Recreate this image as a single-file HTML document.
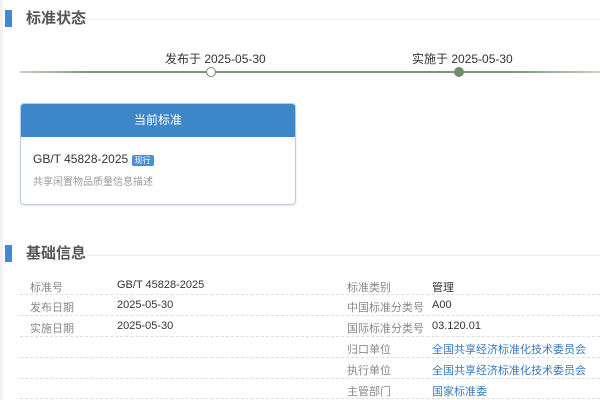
<!DOCTYPE html>
<html><head><meta charset="utf-8"><style>
body{margin:0;width:600px;height:400px;background:#fff;position:relative;overflow:hidden;font-family:"Liberation Sans","Noto Sans CJK SC",sans-serif;color:#333}
.a{position:absolute;white-space:nowrap}
.bar{position:absolute;left:5px;width:7px;height:17px;background:#3d8ad6}
.title{position:absolute;left:26px;font-size:15px;color:#555;line-height:18px;font-weight:bold}
.hl{position:absolute;left:82px;right:0;height:1px;background:#eee}
.row{position:absolute;left:20px;right:0;height:0;border-top:1px dashed #ddd}
.lb{font-size:11px;color:#888}
.v{font-size:11px;color:#333}
.lk{font-size:11px;color:#3a7bc0}
</style></head><body>
<div style="position:absolute;left:0;top:0;width:3px;height:400px;background:#f2f2f2"></div>
<div class="bar" style="top:10px"></div>
<div class="title" style="top:10px">标准状态</div>
<div class="hl" style="top:19px"></div>
<div class="a" style="left:165px;top:50px;font-size:12px;color:#333">发布于 2025-05-30</div>
<div class="a" style="left:412px;top:50px;font-size:12px;color:#333">实施于 2025-05-30</div>
<div class="a" style="left:20px;top:71px;width:580px;height:2px;background:linear-gradient(to right,#c9d3c8,#7a9677 12%,#7a9677 85%,#c9d3c8)"></div>
<div class="a" style="left:206px;top:67px;width:8px;height:8px;border:1.5px solid #6f8f6a;border-radius:50%;background:#fff"></div>
<div class="a" style="left:454px;top:67px;width:10px;height:10px;border-radius:50%;background:#6f8f6a"></div>
<div class="a" style="left:20px;top:103px;width:274px;height:100px;border:1px solid #b9cde0;border-radius:4px;overflow:hidden;box-shadow:0 1px 2px rgba(0,0,0,.1)">
<div style="height:33px;background:#3d87c9;color:#fff;font-size:12px;text-align:center;line-height:33px">当前标准</div>
<div class="a" style="left:12px;top:48px;font-size:12px;color:#333">GB/T 45828-2025 <span style="background:#4a8fd8;color:#fff;font-size:8px;padding:1px 3px;border-radius:2px">现行</span></div>
<div class="a" style="left:12px;top:69px;font-size:10px;color:#999">共享闲置物品质量信息描述</div>
</div>
<div class="bar" style="top:245px"></div>
<div class="title" style="top:245px">基础信息</div>
<div class="hl" style="top:255px"></div>
<div class="a lb" style="left:30px;top:279px">标准号</div><div class="a v" style="left:117px;top:279px">GB/T 45828-2025</div>
<div class="a lb" style="left:347px;top:279px">标准类别</div><div class="a v" style="left:432px;top:279px">管理</div>
<div class="row" style="top:294px"></div>
<div class="a lb" style="left:30px;top:299px">发布日期</div><div class="a v" style="left:117px;top:299px">2025-05-30</div>
<div class="a lb" style="left:347px;top:299px">中国标准分类号</div><div class="a v" style="left:432px;top:299px">A00</div>
<div class="row" style="top:315px"></div>
<div class="a lb" style="left:30px;top:320px">实施日期</div><div class="a v" style="left:117px;top:320px">2025-05-30</div>
<div class="a lb" style="left:347px;top:320px">国际标准分类号</div><div class="a v" style="left:432px;top:320px">03.120.01</div>
<div class="row" style="top:336px"></div>
<div class="a lb" style="left:347px;top:341px">归口单位</div><div class="a lk" style="left:432px;top:341px">全国共享经济标准化技术委员会</div>
<div class="row" style="top:357px"></div>
<div class="a lb" style="left:347px;top:362px">执行单位</div><div class="a lk" style="left:432px;top:362px">全国共享经济标准化技术委员会</div>
<div class="row" style="top:378px"></div>
<div class="a lb" style="left:347px;top:383px">主管部门</div><div class="a lk" style="left:432px;top:383px">国家标准委</div>
<div class="row" style="top:398px"></div>
</body></html>
